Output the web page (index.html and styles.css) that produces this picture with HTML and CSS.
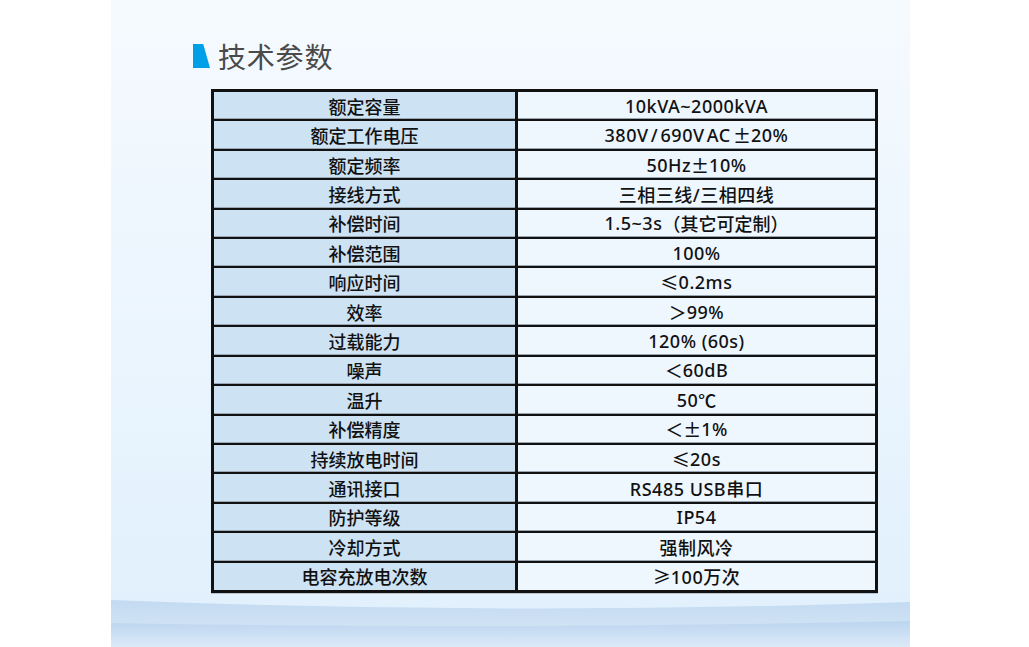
FILE: index.html
```html
<!DOCTYPE html>
<html lang="zh-CN">
<head>
<meta charset="utf-8">
<title>技术参数</title>
<link rel="stylesheet" href="styles.css">
</head>
<body>
<div class="panel">
  <h2 class="title"><span class="title-mark"></span>技术参数</h2>
  <div class="spec">
    <div class="k">额定容量</div><div class="v">10kVA~2000kVA</div>
    <div class="k">额定工作电压</div><div class="v">380V&#8202;/&#8202;690V&#8202;AC&#8202;<span class="cjk">±</span>20%</div>
    <div class="k">额定频率</div><div class="v">50Hz<span class="cjk">±</span>10%</div>
    <div class="k">接线方式</div><div class="v">三相三线/三相四线</div>
    <div class="k">补偿时间</div><div class="v">1.5~3s<span class="cjk">（其它可定制）</span></div>
    <div class="k">补偿范围</div><div class="v">100%</div>
    <div class="k">响应时间</div><div class="v"><span class="cjk">≤</span>0.2ms</div>
    <div class="k">效率</div><div class="v"><span class="cjk">＞</span>99%</div>
    <div class="k">过载能力</div><div class="v">120% (60s)</div>
    <div class="k">噪声</div><div class="v"><span class="cjk">＜</span>60dB</div>
    <div class="k">温升</div><div class="v">50<span class="cjk">℃</span></div>
    <div class="k">补偿精度</div><div class="v"><span class="cjk">＜±</span>1%</div>
    <div class="k">持续放电时间</div><div class="v"><span class="cjk">≤</span>20s</div>
    <div class="k">通讯接口</div><div class="v">RS485 USB串口</div>
    <div class="k">防护等级</div><div class="v">IP54</div>
    <div class="k">冷却方式</div><div class="v">强制风冷</div>
    <div class="k">电容充放电次数</div><div class="v"><span class="cjk">≥</span>100万次</div>
  </div>
  <svg class="waves" viewBox="0 0 799 47" preserveAspectRatio="none" aria-hidden="true">
    <defs>
      <linearGradient id="w1" x1="0" y1="0" x2="0" y2="1">
        <stop offset="0" stop-color="#c3daf1"/>
        <stop offset="1" stop-color="#dbeaf8"/>
      </linearGradient>
      <linearGradient id="w2" x1="0" y1="0" x2="0" y2="1">
        <stop offset="0" stop-color="#bcd5ef"/>
        <stop offset="1" stop-color="#dceaf8"/>
      </linearGradient>
    </defs>
    <path d="M0,0 Q400,16 799,2 L799,47 L0,47 Z" fill="url(#w1)"/>
    <path d="M0,23 Q400,30 799,21 L799,47 L0,47 Z" fill="url(#w2)"/>
  </svg>
</div>
</body>
</html>
```

FILE: styles.css
```css
html, body {
  margin: 0;
  padding: 0;
  background: #ffffff;
}
body {
  font-family: "Noto Sans CJK SC", "Noto Sans", sans-serif;
}
.panel {
  position: relative;
  width: 799px;
  height: 647px;
  margin-left: 111px;
  background: linear-gradient(to bottom, #f5fafe 0%, #ebf5fe 50%, #e0f0fc 100%);
  padding-top: 38px;
  box-sizing: border-box;
  overflow: hidden;
}
.title {
  display: flex;
  align-items: center;
  margin: 0 0 15px 82px;
  height: 36px;
  font-size: 28px;
  line-height: 36px;
  font-weight: 400;
  color: #4a4a4a;
  letter-spacing: 0.8px;
}
.title-mark {
  width: 17px;
  height: 24px;
  margin-right: 8px;
  background: #00a0e9;
  clip-path: polygon(0 0, 60% 0, 100% 100%, 0 100%);
}
.spec {
  margin-left: 100px;
  width: 667px;
  height: 504px;
  box-sizing: border-box;
  display: grid;
  grid-template-columns: 301px 357px;
  grid-template-rows: repeat(17, 1fr);
  column-gap: 3px;
  row-gap: 2px;
  border: 3px solid #111;
  background: #111;
  box-shadow: 0 1px 0 #b9c4cf;
}
.k, .v {
  display: flex;
  align-items: center;
  justify-content: center;
  font-size: 18px;
  font-weight: 500;
  color: #111;
  white-space: pre;
  box-shadow: inset 0 -1px 0 #9aa7b3;
}
.k:nth-last-child(-n+2), .v:nth-last-child(-n+2) {
  box-shadow: none;
}
.k {
  background: #cde2f3;
}
.v {
  background: #eef6fe;
  font-family: "Noto Sans", "Noto Sans CJK SC", sans-serif;
  font-size: 18px;
  letter-spacing: 0.5px;
}
.cjk {
  font-family: "Noto Sans CJK SC", sans-serif;
  font-size: 18px;
  letter-spacing: 0;
}
.waves {
  position: absolute;
  left: 0;
  bottom: 0;
  width: 799px;
  height: 47px;
  display: block;
}
```
